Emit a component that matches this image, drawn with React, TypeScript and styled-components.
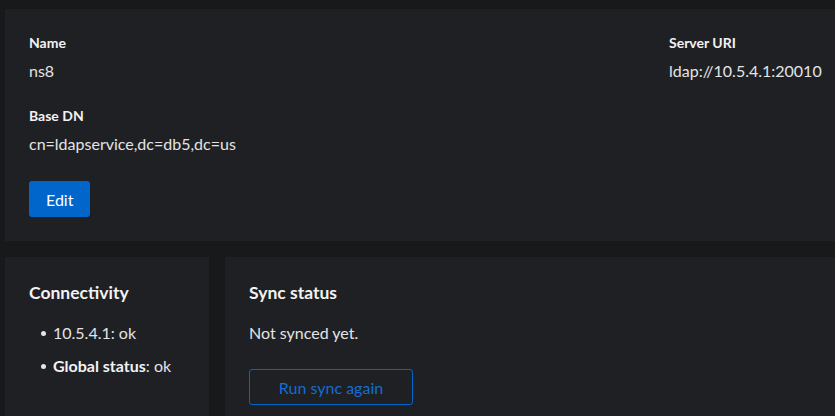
import React from "react";
import styled, { createGlobalStyle } from "styled-components";

const Global = createGlobalStyle`
  html, body {
    margin: 0;
    padding: 0;
    background: #18191b;
    overflow: hidden;
  }
  body {
    font-family: Lato, "Liberation Sans", sans-serif;
    color: #e4e4e4;
    -webkit-font-smoothing: antialiased;
  }
`;

const Page = styled.main`
  width: 835px;
  height: 416px;
  padding: 9px 0 0 5px;
  box-sizing: border-box;
  display: flex;
  flex-direction: column;
  gap: 16px;
`;

const Card = styled.section`
  background: #1f2024;
  padding: 24px;
  box-sizing: border-box;
`;

const TopCard = styled(Card)`
  display: flex;
  flex-direction: column;
  gap: 25px;
`;

const DescList = styled.dl`
  margin: 0;
  display: grid;
  grid-template-columns: 640px 1fr;
  row-gap: 23px;
`;

const Group = styled.div`
  display: flex;
  flex-direction: column;
  gap: 6px;
`;

const Term = styled.dt`
  font-size: 14px;
  line-height: 20px;
  font-weight: 700;
  color: #f2f2f2;
`;

const Desc = styled.dd`
  margin: 0;
  font-size: 16px;
  line-height: 24px;
  color: #e4e4e4;
`;

const PrimaryButton = styled.button`
  align-self: flex-start;
  height: 36px;
  padding: 0 17px;
  background: #0066cc;
  border: none;
  border-radius: 3px;
  color: #ffffff;
  font-family: inherit;
  font-size: 16px;
`;

const BottomRow = styled.div`
  display: grid;
  grid-template-columns: 204px 1fr;
  gap: 16px;
  flex: 1;
`;

const StatusCard = styled(Card)`
  display: flex;
  flex-direction: column;
  gap: 16px;
`;

const Title = styled.h2`
  margin: 0;
  font-size: 17.5px;
  line-height: 24px;
  font-weight: 700;
  color: #f2f2f2;
`;

const List = styled.ul`
  margin: 0;
  padding: 0 0 0 12px;
  list-style: none;
  display: flex;
  flex-direction: column;
  gap: 9px;
`;

const Item = styled.li`
  display: flex;
  align-items: center;
  gap: 7px;
  font-size: 16px;
  line-height: 24px;
  color: #e4e4e4;

  &::before {
    content: "";
    width: 5px;
    height: 5px;
    border-radius: 50%;
    background: #e4e4e4;
    flex: none;
  }
`;

const Strong = styled.strong`
  font-weight: 700;
  color: #f2f2f2;
`;

const Text = styled.p`
  margin: 0;
  font-size: 16px;
  line-height: 24px;
  color: #e4e4e4;
`;

const SecondaryButton = styled.button`
  align-self: flex-start;
  margin-top: 8px;
  width: 164px;
  height: 36px;
  background: transparent;
  border: 1px solid #0066cc;
  border-radius: 3px;
  color: #146dcf;
  font-family: inherit;
  font-size: 16px;
`;

export default function App() {
  return (
    <>
      <Global />
      <Page>
        <TopCard>
          <DescList>
            <Group>
              <Term>Name</Term>
              <Desc>ns8</Desc>
            </Group>
            <Group>
              <Term>Server URI</Term>
              <Desc>ldap://10.5.4.1:20010</Desc>
            </Group>
            <Group>
              <Term>Base DN</Term>
              <Desc>cn=ldapservice,dc=db5,dc=us</Desc>
            </Group>
          </DescList>
          <PrimaryButton>Edit</PrimaryButton>
        </TopCard>
        <BottomRow>
          <StatusCard>
            <Title>Connectivity</Title>
            <List>
              <Item>10.5.4.1: ok</Item>
              <Item>
                <span>
                  <Strong>Global status</Strong>: ok
                </span>
              </Item>
            </List>
          </StatusCard>
          <StatusCard>
            <Title>Sync status</Title>
            <Text>Not synced yet.</Text>
            <SecondaryButton>Run sync again</SecondaryButton>
          </StatusCard>
        </BottomRow>
      </Page>
    </>
  );
}
